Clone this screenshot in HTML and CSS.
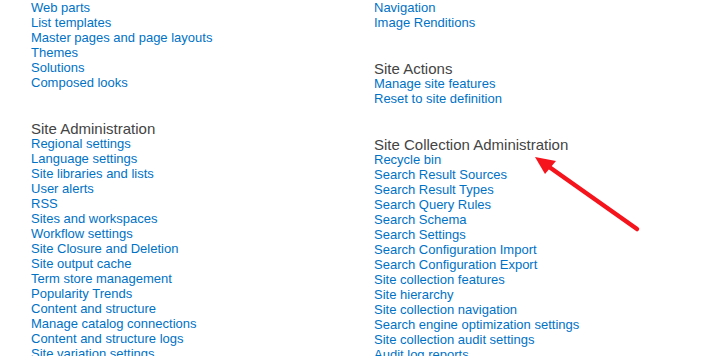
FILE: index.html
```html
<!DOCTYPE html>
<html lang="en">
<head>
  <meta charset="UTF-8" />
  <title>Site Settings</title>
  <link rel="stylesheet" href="styles.css">
</head>
<body>

  <div class="settings">
    <div class="column">
      <ul class="links">
        <li><a class="visited" href="#">Site content types</a></li>
        <li><a href="#">Web parts</a></li>
        <li><a href="#">List templates</a></li>
        <li><a href="#">Master pages and page layouts</a></li>
        <li><a href="#">Themes</a></li>
        <li><a href="#">Solutions</a></li>
        <li><a href="#">Composed looks</a></li>
      </ul>

      <div class="section">
        <h3>Site Administration</h3>
        <ul class="links">
          <li><a href="#">Regional settings</a></li>
          <li><a href="#">Language settings</a></li>
          <li><a href="#">Site libraries and lists</a></li>
          <li><a href="#">User alerts</a></li>
          <li><a href="#">RSS</a></li>
          <li><a href="#">Sites and workspaces</a></li>
          <li><a href="#">Workflow settings</a></li>
          <li><a href="#">Site Closure and Deletion</a></li>
          <li><a href="#">Site output cache</a></li>
          <li><a href="#">Term store management</a></li>
          <li><a href="#">Popularity Trends</a></li>
          <li><a href="#">Content and structure</a></li>
          <li><a href="#">Manage catalog connections</a></li>
          <li><a href="#">Content and structure logs</a></li>
          <li><a href="#">Site variation settings</a></li>
        </ul>
      </div>
    </div>

    <div class="column">
      <ul class="links">
        <li><a href="#">Import Design Package</a></li>
        <li><a href="#">Navigation</a></li>
        <li><a href="#">Image Renditions</a></li>
      </ul>

      <div class="section">
        <h3>Site Actions</h3>
        <ul class="links">
          <li><a href="#">Manage site features</a></li>
          <li><a href="#">Reset to site definition</a></li>
        </ul>
      </div>

      <div class="section">
        <h3>Site Collection Administration</h3>
        <ul class="links">
          <li><a href="#">Recycle bin</a></li>
          <li><a href="#">Search Result Sources</a></li>
          <li><a href="#">Search Result Types</a></li>
          <li><a href="#">Search Query Rules</a></li>
          <li><a href="#">Search Schema</a></li>
          <li><a href="#">Search Settings</a></li>
          <li><a href="#">Search Configuration Import</a></li>
          <li><a href="#">Search Configuration Export</a></li>
          <li><a href="#">Site collection features</a></li>
          <li><a href="#">Site hierarchy</a></li>
          <li><a href="#">Site collection navigation</a></li>
          <li><a href="#">Search engine optimization settings</a></li>
          <li><a href="#">Site collection audit settings</a></li>
          <li><a href="#">Audit log reports</a></li>
        </ul>
      </div>
    </div>
  </div>

  <!-- annotation arrow drawn on top of the screenshot -->
  <svg class="arrow" width="713" height="356" viewBox="0 0 713 356">
    <line x1="637" y1="229" x2="545" y2="164" stroke="#f5141c" stroke-width="4.5" stroke-linecap="round" />
    <polygon points="535,157 556,161 545,174" fill="#f5141c" />
  </svg>

</body>
</html>
```

FILE: styles.css
```css
body {
  margin: 0;
  font-family: "Liberation Sans", Arial, sans-serif;
  background: #fff;
  overflow: hidden;
}

.settings {
  display: grid;
  grid-template-columns: 343px 1fr;
  padding-left: 31px;
  margin-top: -15px;
}

.links {
  list-style: none;
  margin: 0;
  padding: 0;
}

.links li {
  font-size: 13px;
  line-height: 15px;
  white-space: nowrap;
}

.links a {
  color: #0072c6;
  text-decoration: none;
}

.links a.visited {
  color: #8a2bb8;
}

.section {
  margin-top: 31px;
}

.section h3 {
  margin: 0;
  font-size: 15px;
  font-weight: normal;
  line-height: 15px;
  color: #444;
}

.arrow {
  position: absolute;
  top: 0;
  left: 0;
  pointer-events: none;
}
```
